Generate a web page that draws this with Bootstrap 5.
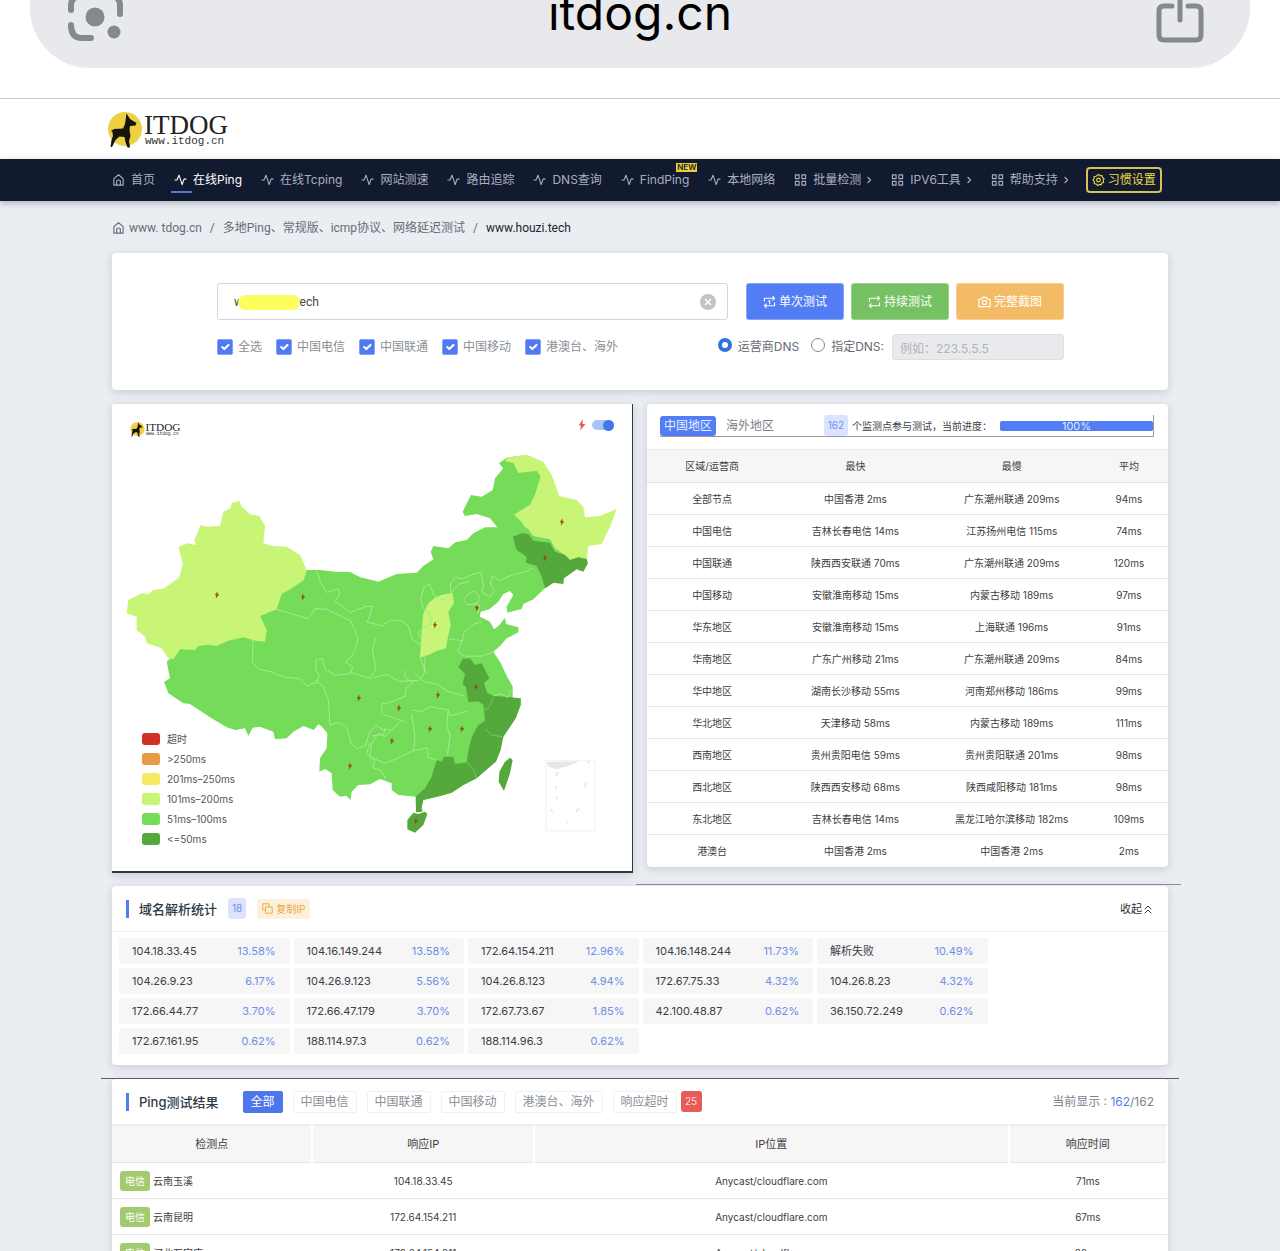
<!DOCTYPE html>
<html lang="zh-CN">
<head>
<meta charset="utf-8">
<meta name="viewport" content="width=device-width, initial-scale=1">
<title>ITDOG - 在线Ping</title>
<link href="https://cdn.jsdelivr.net/npm/bootstrap@5.3.0/dist/css/bootstrap.min.css" rel="stylesheet">
<style>
body{background:#eaedf2;font-family:Inter,"Noto Sans CJK SC",sans-serif;font-size:12px;line-height:18px;color:#3c4043;overflow-x:hidden}
svg{flex:none}
.ico{width:13px;height:14px;fill:none;stroke:currentColor;stroke-width:1.2;stroke-linecap:round;stroke-linejoin:round}
.ico-chev{width:5px}
.ico-copy{width:11px;height:11px}
.ico-fold{width:8px;height:10px;stroke-width:1}
.wrap{max-width:1080px;margin:0 auto;padding:0 12px}
.browser-bar{height:99px;background:#fff;border-bottom:1px solid #c8c8ca;padding:0 30px}
.address{height:68px;background:#e8e9ed;border-radius:0 0 60px 60px;padding:0 45px 0 37px;color:#000}
.address svg{fill:none;stroke:#85898c}
.host-name{font-size:48px;line-height:58px;margin-top:-16px}
.site-head{height:60px;background:#fff}
.site-head svg{margin-left:-5px}
.site-nav{height:42px;background:#121a30;box-shadow:0 2px 6px rgba(30,40,70,.3);position:relative}
.site-nav a{color:#a9afbf;text-decoration:none;display:flex;align-items:center;gap:6px;position:relative;white-space:nowrap}
.site-nav .menu{gap:19px;height:42px}
.site-nav a.current{color:#fff}
.site-nav a.current::after{content:"";position:absolute;left:-3px;bottom:-4px;width:21px;height:2px;background:#5476d8}
.new-tag{position:absolute;right:-8px;top:-8px;background:#e8cf3e;color:#222;font-size:8px;line-height:9px;font-weight:600;padding:0 1px}
.btn-habit{border:2px solid #d3c258;border-radius:4px;background:none;color:#f0dc3c;font-size:12px;line-height:18px;padding:2px 4px;height:26px;gap:3px;white-space:nowrap;margin-left:-2px}
.crumbs{height:52px;padding-top:2px;color:#666c75;font-family:Roboto,"Noto Sans CJK SC",sans-serif}
.crumbs a{color:inherit;text-decoration:none}
.panel{background:#fff;border-radius:4px;box-shadow:0 2px 8px rgba(60,70,90,.2);position:relative}
.search{padding:30px 104px 30px 105px}
.search .line-a{gap:18px}
.search .line-b{margin-top:14px;height:26px;color:#8a8f96}
.host{height:37px;border:1px solid #d4d6d9;border-radius:3px;font-family:Roboto,"Noto Sans CJK SC",sans-serif;font-size:12px;padding:0 16px;color:#444;box-shadow:none;background:#fff}
.blot{position:absolute;left:21px;top:12px;width:62px;height:15px;border-radius:8px;background:#fdfd60}
.clear{position:absolute;right:12px;top:11px;border:0;background:none;padding:0;line-height:0}
.acts{gap:7px}
.act{border:1px solid rgba(255,255,255,.3);border-radius:3px;color:#fff;font-size:12px;line-height:18px;height:37px;width:98px;padding:0;gap:3px}
.act-blue{background:#537df5}.act-green{background:#76c164}.act-gold{background:#f4bb67;width:108px}
.ticks{gap:14px}
.tick{gap:5px}
.dns-side{color:#666b72}
.tick .form-check-input{width:16px;height:16px;margin:0;border-radius:2px;float:none}
.tick .form-check-input:checked{background-color:#5079f3;border-color:#86a2f4}
.tick [type=radio].form-check-input{width:14px;height:14px;border-radius:50%;border:1px solid #85898e;margin:0 1px 4px 0}
.tick [type=radio].form-check-input:checked{background:#fff;border:4px solid #3473df}
.dns{height:26px;width:172px;border:1px solid #dddfe3;border-radius:3px;background:#e9eaee;font-size:12px;padding:2px 7px 0}
.dns::placeholder{color:#b1b4ba}
.duo{display:grid;grid-template-columns:1fr 1fr;gap:14px;margin:14px 0 13px;align-items:start}
.map-card{border-right:1px solid #34373b;border-bottom:2px solid #34373b;border-radius:3px 0 0 0}
.map-card .chart{display:block;width:100%;height:auto}
.map-logo{position:absolute;left:18px;top:17px}
.map-tools{position:absolute;right:18px;top:15px;gap:6px}
.map-tools .form-check-input{width:22px;height:10px;margin:0;float:none;border:0;background:#a9c3f5;border-radius:5px;appearance:none;position:relative;box-shadow:none}
.map-tools .form-check-input::after{content:"";position:absolute;right:0;top:0;width:11px;height:11px;border-radius:50%;background:#4277ea}
.legend{position:absolute;left:30px;bottom:22px;font-size:10px;line-height:20px;color:#555;margin:0}
.legend li{gap:7px}
.legend i{width:18px;height:12px;border-radius:3px}
.region-head{height:45px;padding:11px 14px 0 13px}
.region-head>div{height:22px;border-right:1px solid #999;border-bottom:1px solid #999}
.tabs-row{gap:6px}
.monitor{font-size:10px}
.tab-btn{border:0;border-radius:3px;padding:1px 4px;font-size:12px;line-height:18px;background:none;color:#7b8088}
.tab-btn.on{background:#537df5;color:#e6f0ff}
.soft{background:#dbe4fc;color:#6f8ff0;border-radius:3px;font-size:10px;line-height:21px;padding:0 4px}
.region-head .progress{height:10px;width:153px;border-radius:2px;background:#eee;font-size:11px}
.region-head .progress-bar{background:#537df5;color:#dfe9ff}
.grid-tbl{width:100%;table-layout:fixed;margin:0;font-size:10px;line-height:16px;text-align:center;color:#3c4043}
.grid-tbl th{background:#f6f6f6;font-weight:400;padding:0;height:33px;border-top:1px solid #ececec}
.grid-tbl td{padding:0;height:32px;border-top:1px solid #e4e5e7}
.rule{position:absolute;height:1px;background:#8a8d92}
.rule-a{left:524px;right:-13px;top:-2px}
.rule-b{left:-11px;right:-11px;top:-1px;background:#5c5f63}
.panel-head{height:46px;padding:0 14px;border-bottom:1px solid #f0f0f1}
.panel-head h2{font-size:13px;line-height:18px;font-weight:500;margin:0;border-left:3px solid #537df5;padding-left:10px;color:#2f3a48}
.stat-head{gap:11px}
.copy{border:0;border-radius:3px;background:#fdf0dc;color:#eca63c;font-size:10px;line-height:20px;padding:0 5px;gap:3px}
.fold{border:0;background:none;padding:0 2px 0 0;font-size:11px;color:#333;gap:2px}
.tiles{display:grid;grid-template-columns:repeat(6,1fr);gap:4px;padding:6px 6px 11px 7px}
.tiles>div{display:flex;justify-content:space-between;background:#f6f6f7;border-radius:2px;padding:0 14px 0 13px;font-size:11px;line-height:26px}
.tiles>.first{grid-column:1}
.tiles span{color:#6d8ee6}
.result-panel{margin-top:14px}
.flts{gap:10px}
.flt{border:1px solid #f1f1f3;border-radius:2px;background:#fff;color:#8a8f96;font-size:12px;line-height:18px;padding:1px 7px;height:22px}
.flt.on{background:#4d76ec;color:#fff;border-color:#4d76ec}
.alarm{background:#e75c58;color:#fbd9d7;border-radius:3px;font-size:10px;line-height:21px;width:21px;text-align:center}
.shown{color:#7d838b}
.shown span{color:#537fe6}
.ping-tbl{font-size:10px}
.ping-tbl th{height:37px;font-size:11px;border-right:2px solid #fff}
.ping-tbl td{height:36px}
.isp{background:#a3ca6f;color:#fff;border-radius:3px;font-size:10px;line-height:20px;padding:0 5px;display:inline-block;margin-right:3px}
</style>
<script src="https://cdn.jsdelivr.net/npm/bootstrap@5.3.0/dist/js/bootstrap.bundle.min.js"></script>
</head>
<body>
<svg width="0" height="0" class="position-absolute" aria-hidden="true">
<symbol id="home" viewBox="0 0 14 14"><path d="M2 5.5 7 1.3l5 4.2v7H2zM5 12.3V8q2-2 4 0v4.3"/></symbol>
<symbol id="pulse" viewBox="0 0 14 14"><path d="M1 7h2.2L5.4 1.8 8.8 12 10.8 6H13"/></symbol>
<symbol id="four" viewBox="0 0 14 14"><path d="M1.5 1.5h4v4h-4zM8.5 1.5h4v4h-4zM1.5 8.5h4v4h-4zM8.5 8.5h4v4h-4z"/></symbol>
<symbol id="chev" viewBox="0 0 5 14"><path d="m1 4.5 2.500 2.500L1 9.500"/></symbol>
<symbol id="gear" viewBox="0 0 14 14"><path d="m7 1 1.6 1.5 2.2-.3.4 2.1L13 5.6 12 7.500 12.600 9.500 10.700 10.300 9.900 12.200 7.900 11.700 6 13 4.700 11.300 2.500 11 2.600 8.800 1 7.200 2.300 5.500 2.200 3.300 4.400 3z"/><circle cx="7" cy="7" r="2"/></symbol>
<symbol id="bolt" viewBox="0 0 16 22"><path d="M10 0 1 12h5L4 22l11-13H9z"/></symbol>
<symbol id="brand" viewBox="0 0 122 38"><circle cx="18" cy="19" r="17" fill="#eed042"/><path fill="#17130d" d="M19.500 3.500 23 9l6.500 4-1 2.500-5.500.5-.5 4 1 6-1.500 5 1 6.500h-2.500L18.500 32l-1-5-5-.5-4 3.500L5 37H3.500l1-7 1.500-4-.5-4-1.500-1 3-2 9-.5 2-4.500z"/><text x="37" y="24" font-family="Liberation Serif, serif" font-size="27" fill="#222">ITDOG</text><text x="38" y="34" font-family="Liberation Mono, monospace" font-size="11" fill="#333">www.itdog.cn</text></symbol>
</svg>

<div class="browser-bar">
 <div class="address d-flex justify-content-between">
  <svg width="58" height="44" viewBox="0 0 58 44"><path stroke-width="6" stroke-linecap="round" d="M4 10V6Q4-4 14-4M44-4q9 0 9 10v8M4 25q0 13 11 13h9"/><circle cx="28" cy="17" r="9.500" fill="#85898c" stroke="none"/><circle cx="47" cy="32" r="6.500" fill="#85898c" stroke="none"/></svg>
  <div class="host-name">itdog.cn</div>
  <svg width="50" height="44" viewBox="0 0 50 44"><path stroke-width="5" stroke-linecap="round" d="M17 6H9Q4 6 4 11v24q0 5 5 5h32q5 0 5-5V11q0-5-5-5h-8M25-3V20"/></svg>
 </div>
</div>
<header class="site-head"><div class="wrap d-flex align-items-center h-100"><svg width="122" height="38" role="img" aria-label="ITDOG"><use href="#brand"/></svg></div></header>
<nav class="site-nav"><div class="wrap"><div class="menu d-flex align-items-center">
 <a href="#"><svg class="ico"><use href="#home"/></svg>首页</a>
 <a href="#" class="current"><svg class="ico"><use href="#pulse"/></svg>在线Ping</a>
 <a href="#"><svg class="ico"><use href="#pulse"/></svg>在线Tcping</a>
 <a href="#"><svg class="ico"><use href="#pulse"/></svg>网站测速</a>
 <a href="#"><svg class="ico"><use href="#pulse"/></svg>路由追踪</a>
 <a href="#"><svg class="ico"><use href="#pulse"/></svg>DNS查询</a>
 <a href="#"><svg class="ico"><use href="#pulse"/></svg>FindPing<span class="new-tag">NEW</span></a>
 <a href="#"><svg class="ico"><use href="#pulse"/></svg>本地网络</a>
 <a href="#"><svg class="ico"><use href="#four"/></svg>批量检测<svg class="ico ico-chev"><use href="#chev"/></svg></a>
 <a href="#"><svg class="ico"><use href="#four"/></svg>IPV6工具<svg class="ico ico-chev"><use href="#chev"/></svg></a>
 <a href="#"><svg class="ico"><use href="#four"/></svg>帮助支持<svg class="ico ico-chev"><use href="#chev"/></svg></a>
 <button type="button" class="btn-habit d-flex align-items-center"><svg class="ico"><use href="#gear"/></svg>习惯设置</button>
</div></div></nav>

<main class="wrap">
 <div class="crumbs d-flex align-items-center"><svg class="ico me-1"><use href="#home"/></svg><a href="#">www. tdog.cn</a><span class="mx-2">/</span><a href="#">多地Ping、常规版、icmp协议、网络延迟测试</a><span class="mx-2">/</span><span class="text-dark">www.houzi.tech</span></div>

 <form class="panel search">
  <div class="line-a d-flex">
   <div class="position-relative flex-grow-1"><input class="form-control host" type="text" aria-label="域名" value="www.houzi.tech"><span class="blot"></span><button type="button" class="clear" aria-label="清除"><svg width="16" height="16" viewBox="0 0 16 16"><circle cx="8" cy="8" r="8" fill="#c3c3c3"/><path stroke="#fff" stroke-width="1.500" d="m5 5 6 6m0-6-6 6"/></svg></button></div>
   <div class="acts d-flex">
    <button type="button" class="act act-blue d-flex align-items-center justify-content-center"><svg class="ico" viewBox="0 0 14 14"><path d="M1.500 6V3h11M10.500 1l2 2-2 2M12.500 8v3h-11M3.500 9l-2 2 2 2M6.300 6l.9-.6V9"/></svg>单次测试</button>
    <button type="button" class="act act-green d-flex align-items-center justify-content-center"><svg class="ico" viewBox="0 0 14 14"><path d="M1.500 6V3h11M10.500 1l2 2-2 2M12.500 8v3h-11M3.500 9l-2 2 2 2"/></svg>持续测试</button>
    <button type="button" class="act act-gold d-flex align-items-center justify-content-center"><svg class="ico" viewBox="0 0 14 14"><path d="M1 4h3l1-2h4l1 2h3v8H1z"/><circle cx="7" cy="7.500" r="2.200"/></svg>完整截图</button>
   </div>
  </div>
  <div class="line-b d-flex justify-content-between">
   <div class="ticks d-flex align-items-center">
    <label class="tick d-flex align-items-center"><input class="form-check-input" type="checkbox" checked>全选</label>
    <label class="tick d-flex align-items-center"><input class="form-check-input" type="checkbox" checked>中国电信</label>
    <label class="tick d-flex align-items-center"><input class="form-check-input" type="checkbox" checked>中国联通</label>
    <label class="tick d-flex align-items-center"><input class="form-check-input" type="checkbox" checked>中国移动</label>
    <label class="tick d-flex align-items-center"><input class="form-check-input" type="checkbox" checked>港澳台、海外</label>
   </div>
   <div class="dns-side d-flex align-items-center">
    <label class="tick d-flex align-items-center"><input class="form-check-input" type="radio" name="dns" checked>运营商DNS</label>
    <label class="tick d-flex align-items-center ms-2 ps-1"><input class="form-check-input" type="radio" name="dns">指定DNS:</label>
    <input class="dns ms-2" type="text" placeholder="例如：223.5.5.5" aria-label="指定DNS" disabled>
   </div>
  </div>
 </form>

 <div class="duo">
  <section class="panel map-card">
   <svg class="chart" viewBox="0 0 1560 1401" role="img" aria-label="中国延迟地图">
    <path fill="#75dc5a" d="M584 498 624 498 670 503 714 504 745 520 779 528 799 533 854 510 914 506 935 485 964 466 956 443 964 426 1009 433 1030 415 1064 408 1084 388 1119 370 1156 370 1134 343 1094 330 1059 336 1052 323 1077 273 1109 278 1142 258 1149 223 1174 193 1161 178 1186 160 1244 153 1290 173 1315 213 1338 276 1390 300 1425 470 1299 553 1264 586 1234 600 1229 615 1186 626 1184 608 1204 573 1194 561 1174 570 1159 593 1132 616 1106 623 1104 638 1134 653 1146 676 1160 665 1179 641 1182 660 1219 670 1219 685 1184 703 1165 725 1144 743 1164 773 1184 815 1202 848 1202 883 1226 883 1226 903 1211 943 1174 998 1152 1063 1094 1123 1054 1143 1019 1166 984 1176 934 1188 911 1178 859 1173 839 1158 839 1138 804 1125 774 1141 739 1143 719 1163 716 1188 703 1175 684 1178 662 1158 659 1108 640 1095 622 1103 624 1063 644 1033 646 988 630 968 619 960 606 978 574 966 544 983 524 1003 489 1006 484 983 444 968 422 971 409 996 399 973 370 978 344 970 294 940 234 900 214 898 169 868 156 833 174 823 164 773 204 736 300 650 444 600z"/>
    <path fill="#c9f577" d="m382 291 7 17 25 23 28 5 17 30-5 52 30 8 40 2 40 25 20 45-8 30-37 25-30 17-15 46-50 20 20 42-5 35-25-2-40-11-45 10-35 16-25-4-30 4-10 12-45-2-20 30-15-3-20-30-45-15-5-20-25-20V638l-30-10 5-40 40-20 20 3 15-13 30-4 45-31 5-10 8-35-13-50 30-10 23 5-5-14 19-46 20 5 38-3 10-42 22-10 4-17z"/>
    <path fill="#c9f577" d="m1186 160 58-7 50 20 25 40 23 63 52 12 20 20 5 32 45-4 50-21-20 53-25 52-40 6-5 45-25-11-25 8-15-15-30-20-15-27-50-10-15-20-10-6-10-16-23-22 48-30 15-30 17-55-12-17-55 7-15-30-25-5z"/>
    <path fill="#c9f577" d="m1021 566 5 32-17 25 7 40-10 45-4 25-28 8-25 12-25 8 5-78 5-55 15-30 20-17 20-8z"/>
    <path fill="#55a83b" d="m1202 398 27-10 20 2 15 20 50 6 15 27 30 10 15 15 25-8 25 5 4 13-14 25-20-7-38 27-2 17-30-4-25 17-10-35-15-32-32-10 2-18-30-20zM1074 763l15 20 20-5 23 45-16 15 10 30 20 8 33 2 47 5v20l-15 40-37 55-8 40-14 35-58 50-40 20-35 23-35 10-50 12-5 25 3 10-20 2-1-47 28-25 20-35 15-50 15 5 7-15h28l5 22 35-5 5-35 10-40 18-35 22-15-5-48-15-10-30 3-7-45-10-10 7-30-20-20 13-25z"/>
    <path fill="#55a83b" d="m904 1226 15 4 20-7 7 7-12 33-25 23-23-10v-28zM1194 1061l8 7-8 40-18 53-16-28 2-30 17-30z"/>
    <path fill="none" stroke="#a5ea92" stroke-width="3" stroke-linejoin="round" d="m614 500 12 35 18 30 35-10 5 15-14 22 35 25 10 8 45-17 20-2-7 30-8 18 45 12 25-18 36 3 18 15 12 40 22 16 6-12-10-25 17-15 22-10-4-30-20-15-8-30 10-35 17-10 13 35 30 13 45-48 35-8M494 616l40 12 55 16 20-30 37 2 40 20 30 15 22 50-6 28-14 30-18 15 22 15-8 20-45 5-30-20-8-30-18 3-2 30 10 15-5 22-30 12-25-22-45-5-38-15-35-8-22-20 2-60-4-10M609 828l25 20 15 40 5 75 25-8 25 15 14 50 18 14 25-10 12-40 20-20 18 12 25 2M714 804l62 20 15-30-10-60 10-30M786 820l40-8 35 20 60-3 15-20 5-60M909 808l28 25 40 8 28 20 50 15M924 761l20 50M1016 563V535l15-15 20 5 20-10 35-10 8 40-5 20 25 15 13-20-12-20 6-25 20 15 35-15 45-12 20-10M1054 588l18-20 15-8 15 18-5 20-30 5zM1085 600l20 5-10 25M1011 705l40 5 5-25 30-25 25-7M1051 710l-15 32 25 15 50-1 33-12M1146 875l20-5 22 10 10-22M1009 915l-5 50 10 30-8 60M901 918l28 5 25-15 55 10 5 18 50-15M899 930l10 70-5 40-40 20-45 18-45-20 5-40 20-30 20 10 45-45M904 1040l42-8 2 28 25 8M880 800l-2 20 25 15-20 18-5 25-45 18-22 3-3 30 45 15 26 10M780 996l35-5 5-20M774 1015l-10 35 25 20-8 20 25 10 16 25"/>
    <path fill="none" stroke="#8ed27a" stroke-width="2" d="m1146 878-17 35-15 7M1119 975l20 18 32 5M1064 1075l20 20 10 28"/>
    <path fill="#e6e6e6" d="m1302 1074 100-2-28 12-42 12-20-8z"/><path fill="none" stroke="#e8e8e8" stroke-width="3" d="M1302 1070h147v211h-147z" opacity=".6"/><path fill="none" stroke="#dcdcdc" stroke-width="5" d="M1340 1105l-10 12M1422 1135l-4 15M1331 1145v10M1332 1177l3 10M1400 1213l-8 12M1315 1215l7 9M1366 1252v7M1430 1072v8" opacity=".7"/>
    <g fill="#9a4a10"><use href="#bolt" x="307" y="562" width="16" height="22"/><use href="#bolt" x="565" y="568" width="16" height="22"/><use href="#bolt" x="1342" y="343" width="16" height="22"/><use href="#bolt" x="1291" y="451" width="16" height="22"/><use href="#bolt" x="1087" y="601" width="16" height="22"/><use href="#bolt" x="961" y="652" width="16" height="22"/><use href="#bolt" x="733" y="871" width="16" height="22"/><use href="#bolt" x="970" y="862" width="16" height="22"/><use href="#bolt" x="853" y="901" width="16" height="22"/><use href="#bolt" x="1084" y="838" width="16" height="22"/><use href="#bolt" x="832" y="1000" width="16" height="22"/><use href="#bolt" x="946" y="964" width="16" height="22"/><use href="#bolt" x="1042" y="964" width="16" height="22"/><use href="#bolt" x="706" y="1075" width="16" height="22"/><use href="#bolt" x="904" y="1240" width="16" height="22"/></g>
   </svg>
   <svg class="map-logo" width="51" height="16" aria-hidden="true"><use href="#brand"/></svg>
   <div class="map-tools d-flex align-items-center"><svg width="8" height="12" fill="#e25a50"><use href="#bolt"/></svg><input class="form-check-input" type="checkbox" role="switch" aria-label="动态效果" checked></div>
   <ul class="legend list-unstyled">
    <li class="d-flex align-items-center"><i style="background:#cf3127"></i>超时</li>
    <li class="d-flex align-items-center"><i style="background:#e99a48"></i>&gt;250ms</li>
    <li class="d-flex align-items-center"><i style="background:#f4eb62"></i>201ms–250ms</li>
    <li class="d-flex align-items-center"><i style="background:#c9f577"></i>101ms–200ms</li>
    <li class="d-flex align-items-center"><i style="background:#75dc5a"></i>51ms–100ms</li>
    <li class="d-flex align-items-center"><i style="background:#55a83b"></i>&lt;=50ms</li>
   </ul>
  </section>
  <section class="panel">
   <div class="region-head"><div class="d-flex align-items-center justify-content-between">
    <div class="tabs-row d-flex"><button type="button" class="tab-btn on">中国地区</button><button type="button" class="tab-btn">海外地区</button></div>
    <div class="monitor d-flex align-items-center"><span class="soft me-1">162</span>个监测点参与测试，当前进度：<div class="progress ms-2"><div class="progress-bar w-100">100%</div></div></div>
   </div></div>
   <table class="grid-tbl">
    <colgroup><col style="width:25%"><col style="width:30%"><col style="width:30%"><col style="width:15%"></colgroup>
    <thead><tr><th>区域/运营商</th><th>最快</th><th>最慢</th><th>平均</th></tr></thead>
    <tbody>
    <tr><td>全部节点</td><td>中国香港 2ms</td><td>广东潮州联通 209ms</td><td>94ms</td></tr>
    <tr><td>中国电信</td><td>吉林长春电信 14ms</td><td>江苏扬州电信 115ms</td><td>74ms</td></tr>
    <tr><td>中国联通</td><td>陕西西安联通 70ms</td><td>广东潮州联通 209ms</td><td>120ms</td></tr>
    <tr><td>中国移动</td><td>安徽淮南移动 15ms</td><td>内蒙古移动 189ms</td><td>97ms</td></tr>
    <tr><td>华东地区</td><td>安徽淮南移动 15ms</td><td>上海联通 196ms</td><td>91ms</td></tr>
    <tr><td>华南地区</td><td>广东广州移动 21ms</td><td>广东潮州联通 209ms</td><td>84ms</td></tr>
    <tr><td>华中地区</td><td>湖南长沙移动 55ms</td><td>河南郑州移动 186ms</td><td>99ms</td></tr>
    <tr><td>华北地区</td><td>天津移动 58ms</td><td>内蒙古移动 189ms</td><td>111ms</td></tr>
    <tr><td>西南地区</td><td>贵州贵阳电信 59ms</td><td>贵州贵阳联通 201ms</td><td>98ms</td></tr>
    <tr><td>西北地区</td><td>陕西西安移动 68ms</td><td>陕西咸阳移动 181ms</td><td>98ms</td></tr>
    <tr><td>东北地区</td><td>吉林长春电信 14ms</td><td>黑龙江哈尔滨移动 182ms</td><td>109ms</td></tr>
    <tr><td>港澳台</td><td>中国香港 2ms</td><td>中国香港 2ms</td><td>2ms</td></tr>
    </tbody>
   </table>
  </section>
 </div>

 <section class="panel">
  <span class="rule rule-a"></span>
  <div class="panel-head stat-head d-flex align-items-center"><h2>域名解析统计</h2><span class="soft">18</span><button type="button" class="copy d-flex align-items-center"><svg class="ico ico-copy" viewBox="0 0 14 14"><path d="M4 9H1V1h8v3M5 5h8v8H5z"/></svg>复制IP</button><button type="button" class="fold ms-auto d-flex align-items-center">收起<svg class="ico ico-fold" viewBox="0 0 8 10"><path d="m1 5 3-3 3 3M1 9l3-3 3 3"/></svg></button></div>
  <div class="tiles">
   <div>104.18.33.45<span>13.58%</span></div><div>104.16.149.244<span>13.58%</span></div><div>172.64.154.211<span>12.96%</span></div><div>104.16.148.244<span>11.73%</span></div><div>解析失败<span>10.49%</span></div>
   <div class="first">104.26.9.23<span>6.17%</span></div><div>104.26.9.123<span>5.56%</span></div><div>104.26.8.123<span>4.94%</span></div><div>172.67.75.33<span>4.32%</span></div><div>104.26.8.23<span>4.32%</span></div>
   <div class="first">172.66.44.77<span>3.70%</span></div><div>172.66.47.179<span>3.70%</span></div><div>172.67.73.67<span>1.85%</span></div><div>42.100.48.87<span>0.62%</span></div><div>36.150.72.249<span>0.62%</span></div>
   <div class="first">172.67.161.95<span>0.62%</span></div><div>188.114.97.3<span>0.62%</span></div><div>188.114.96.3<span>0.62%</span></div>
  </div>
 </section>

 <section class="panel result-panel">
  <span class="rule rule-b"></span>
  <div class="panel-head d-flex align-items-center"><h2 class="me-3">Ping测试结果</h2>
   <div class="flts d-flex align-items-center ms-2"><button type="button" class="flt on">全部</button><button type="button" class="flt">中国电信</button><button type="button" class="flt">中国联通</button><button type="button" class="flt">中国移动</button><button type="button" class="flt">港澳台、海外</button><button type="button" class="flt">响应超时</button></div>
   <span class="alarm ms-1">25</span><span class="shown ms-auto">当前显示 : <span>162</span>/162</span></div>
  <table class="grid-tbl ping-tbl">
   <colgroup><col style="width:19%"><col style="width:21%"><col style="width:45%"><col style="width:15%"></colgroup>
   <thead><tr><th>检测点</th><th>响应IP</th><th>IP位置</th><th>响应时间</th></tr></thead>
   <tbody>
   <tr><td class="text-start ps-2"><span class="isp">电信</span>云南玉溪</td><td>104.18.33.45</td><td>Anycast/cloudflare.com</td><td>71ms</td></tr>
   <tr><td class="text-start ps-2"><span class="isp">电信</span>云南昆明</td><td>172.64.154.211</td><td>Anycast/cloudflare.com</td><td>67ms</td></tr>
   <tr><td class="text-start ps-2"><span class="isp">电信</span>河北石家庄</td><td>172.64.154.211</td><td>Anycast/cloudflare.com</td><td>82ms</td></tr>
   </tbody>
  </table>
 </section>
</main>
</body>
</html>
